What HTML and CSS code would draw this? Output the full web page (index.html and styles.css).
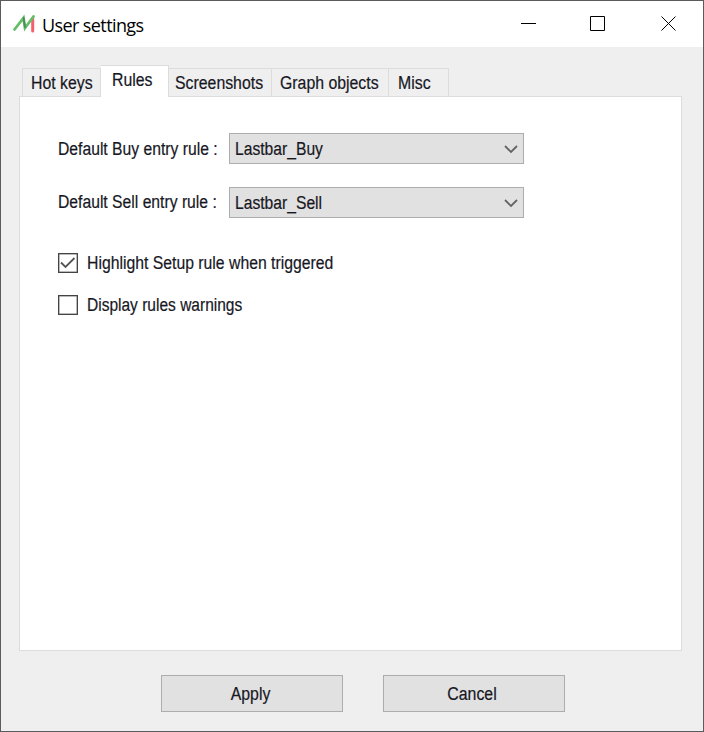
FILE: index.html
```html
<!DOCTYPE html>
<html lang="en">
<head>
<meta charset="utf-8">
<title>User settings</title>
<link rel="stylesheet" href="styles.css">
</head>
<body>
<main class="window">
  <header class="titlebar">
    <svg class="logo" width="24" height="22" viewBox="0 0 24 22" fill="none" stroke-linecap="round">
      <path d="M20.700 6.500v12.500" stroke="#f4606c" stroke-width="3"/>
      <path d="M2.500 17.500 11.500 6 13 16 21.500 4.500" stroke="#65bd67" stroke-width="2.800"/>
      <path d="m11.700 6 1.200 9" stroke="#4c8b55" stroke-width="1.800"/>
    </svg>
    <h1 class="title">User settings</h1>
    <div class="controls">
      <svg width="16" height="16" viewBox="0 0 16 16"><path d="M0 7.500h15" stroke="#000"/></svg>
      <svg class="maximize" width="16" height="16" viewBox="0 0 16 16"><path d="M.5.500h14v14H.5z" fill="none" stroke="#000"/></svg>
      <svg width="16" height="16" viewBox="0 0 16 16"><path d="m.5.500 14 14m0-14-14 14" stroke="#000"/></svg>
    </div>
  </header>
  <nav class="tabs">
    <div class="tab hotkeys"><span class="text">Hot keys</span></div>
    <div class="tab active"><span class="text">Rules</span></div>
    <div class="tab screenshots"><span class="text">Screenshots</span></div>
    <div class="tab graph"><span class="text">Graph objects</span></div>
    <div class="tab misc"><span class="text">Misc</span></div>
  </nav>
  <section class="panel">
    <div class="field"><label class="label"><span class="text">Default Buy entry rule :</span></label>
      <div class="select"><span class="text">Lastbar_Buy</span><svg width="14" height="9" viewBox="0 0 14 9"><path d="m1 1 6 6 6-6" fill="none" stroke="#646464" stroke-width="1.800"/></svg></div></div>
    <div class="field"><label class="label sell"><span class="text">Default Sell entry rule :</span></label>
      <div class="select"><span class="text">Lastbar_Sell</span><svg width="14" height="9" viewBox="0 0 14 9"><path d="m1 1 6 6 6-6" fill="none" stroke="#646464" stroke-width="1.800"/></svg></div></div>
    <div class="check first"><div class="box"><svg width="17" height="17" viewBox="0 0 17 17"><path d="m2 8.500 4.500 4.500L15.500 4" fill="none" stroke="#555" stroke-width="1.800"/></svg></div><span class="text highlight">Highlight Setup rule when triggered</span></div>
    <div class="check"><div class="box"></div><span class="text display">Display rules warnings</span></div>
  </section>
  <footer class="actions">
    <button class="button"><span class="text">Apply</span></button>
    <button class="button"><span class="text">Cancel</span></button>
  </footer>
</main>
</body>
</html>
```
FILE: styles.css
```css
* { box-sizing: border-box; }
body { margin: 0; }
.window { width: 704px; height: 732px; background: #efefef; border: 1px solid #5c5a5c; color: #17171f; font: 18px/22px "Liberation Sans", sans-serif; white-space: nowrap; }
.text { display: inline-block; transform: scaleX(.88); transform-origin: left; -webkit-text-stroke: .2px #17171f; }
.titlebar { height: 46px; background: #fff; display: flex; align-items: center; padding: 0 26px 0 11px; }
.logo { margin-top: -2px; }
.title { font: 18px/24px "Open Sans", sans-serif; letter-spacing: -.6px; margin: 1px 0 0 6px; color: #000; }
.controls { margin-left: auto; display: flex; gap: 54px; }
.maximize { margin: 0 1px 0 -1px; }
.tabs { height: 49px; padding: 0 0 0 21px; display: flex; align-items: flex-end; }
.tab { height: 28px; border: 1px solid #dcdcdc; border-left: 0; border-bottom: 0; padding: 3px 0 0 6px; }
.hotkeys { width: 79px; border-left: 1px solid #dcdcdc; padding-left: 8px; }
.active { width: 68px; height: 32px; background: #fff; padding-left: 11px; margin-bottom: -1px; position: relative; z-index: 1; }
.screenshots { width: 103px; }
.graph { width: 117px; padding-left: 8px; }
.misc { width: 60px; padding-left: 9px; }
.panel { margin: 0 21px 0 18px; height: 555px; border: 1px solid #dcdcdc; background: #fff; padding: 36px 0 0 38px; }
.field { display: flex; height: 31px; margin-bottom: 23px; }
.label { width: 171px; padding-top: 5px; }
.label .text { transform: scaleX(.872); }
.sell { padding-top: 4px; }
.select { width: 295px; height: 31px; background: #e1e1e1; border: 1px solid #adadad; display: flex; justify-content: space-between; align-items: center; padding: 1px 5px 0 5px; }
.select .text { transform: scaleX(.87); }
.check { display: flex; align-items: center; height: 22px; gap: 9px; margin-bottom: 20px; }
.first { margin-top: 34px; }
.check .highlight { transform: scaleX(.876); }
.check .display { transform: scaleX(.862); }
.box { width: 20px; height: 20px; border: 1.5px solid #444; display: flex; box-shadow: inset 0 0 0 .5px #777; }
.actions { display: flex; gap: 40px; padding: 24px 0 0 160px; }
.button { width: 182px; height: 37px; border: 1px solid #adadad; background: #e1e1e1; font: inherit; color: inherit; padding: 1px 3px 0 0; }
.button .text { transform-origin: center; }
```
